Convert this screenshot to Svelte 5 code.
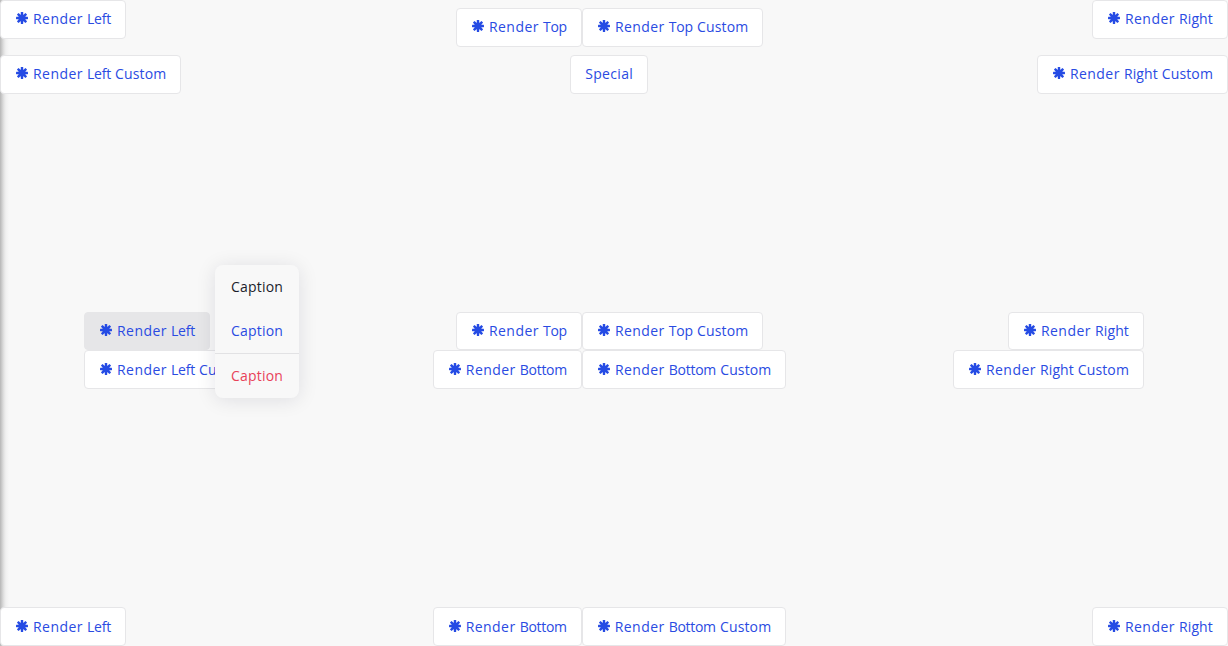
<script>
  const rows = [
    {
      name: 'top',
      left: [['Render Left'], ['Render Left Custom']],
      center: [['Render Top', 'Render Top Custom'], ['Special']],
      right: [['Render Right'], ['Render Right Custom']]
    },
    {
      name: 'middle',
      left: [['Render Left'], ['Render Left Custom']],
      center: [['Render Top', 'Render Top Custom'], ['Render Bottom', 'Render Bottom Custom']],
      right: [['Render Right'], ['Render Right Custom']]
    },
    {
      name: 'bottom',
      left: [['Render Left']],
      center: [['Render Bottom', 'Render Bottom Custom']],
      right: [['Render Right']]
    }
  ];
  const spokes = [0, 45, 90, 135];
  // Splits a label into words, each keeping the space that follows it.
  const words = (label) => label.match(/\S+\s*/g);
</script>

<main>
  {#each rows as row}
    <section class={row.name}>
      {#each ['left', 'center', 'right'] as side}
        <div class="group {side}">
          {#each row[side] as line, i}
            <div class="line">
              {#each line as label}
                <button class:active={row.name === 'middle' && side === 'left' && i === 0}>
                  {#if label !== 'Special'}
                    <svg viewBox="0 0 14 14" aria-hidden="true">
                      {#each spokes as angle}
                        <rect x="5.8" y="1" width="2.4" height="12" rx="0.4" transform="rotate({angle} 7 7)" />
                      {/each}
                      <circle cx="7" cy="7" r="3.6" />
                    </svg>
                  {/if}
                  <span class="label">{#each words(label) as word}<span class="w-{word.trim().toLowerCase()}">{word}</span>{/each}</span>
                </button>
              {/each}
            </div>
          {/each}
        </div>
      {/each}
    </section>
  {/each}
  <div class="menu">
    <div class="item dark">Caption</div>
    <div class="item">Caption</div>
    <div class="item danger">Caption</div>
  </div>
</main>

<style>
  :global(body) {
    background: #f8f8f8;
  }
  main {
    position: relative;
    box-sizing: border-box;
    height: 100vh;
    overflow: hidden;
    display: grid;
    grid-template-rows: 312px 1fr auto;
    font: 14px/20px 'Open Sans', 'Noto Sans', sans-serif;
    color: #2a4be2;
    background: linear-gradient(to right, #b6b6b6 0, #cecece 2px, #e4e4e4 4px, #f1f1f1 6px, #f8f8f8 9px) #f8f8f8;
  }
  section {
    display: flex;
    justify-content: space-between;
    align-items: flex-start;
  }
  .group {
    display: flex;
    flex-direction: column;
    align-items: center;
  }
  .left {
    align-items: flex-start;
  }
  .right {
    align-items: flex-end;
  }
  .top .group {
    gap: 16px;
  }
  .top .center {
    padding-top: 8px;
    gap: 8px;
  }
  .top .center .line:last-child {
    margin-right: 1px;
  }
  .middle {
    padding: 0 84px;
  }
  .center {
    padding-left: 1px;
  }
  .line {
    display: flex;
  }
  button {
    box-sizing: border-box;
    height: 39px;
    display: flex;
    align-items: flex-start;
    padding: 8px 14px 0;
    border: 1px solid #e6e6e8;
    border-radius: 4px;
    background: #fff;
    color: inherit;
    font: inherit;
    white-space: nowrap;
  }
  .middle .line:first-child button {
    height: 38px;
  }
  .middle .line:last-child button,
  .bottom button {
    padding-top: 9px;
  }
  button.active {
    background: #e6e6e8;
  }
  .label {
    white-space: pre;
  }
  .w-render {
    letter-spacing: 0.44px;
  }
  .w-left {
    letter-spacing: -0.22px;
    word-spacing: 0.7px;
  }
  .w-top {
    letter-spacing: -0.24px;
    word-spacing: 0.8px;
  }
  .w-bottom {
    letter-spacing: -0.29px;
    word-spacing: 0.9px;
  }
  .w-right {
    letter-spacing: 0.14px;
  }
  .w-custom {
    letter-spacing: 0.13px;
  }
  .w-special {
    letter-spacing: 0.33px;
  }
  svg {
    width: 14px;
    height: 14px;
    margin: 2px 4px 0 0;
    fill: #254be4;
  }
  .menu {
    position: absolute;
    left: 215px;
    top: 265px;
    width: 84px;
    height: 133px;
    border-radius: 8px;
    background: #f8f8f8;
    box-shadow: 0 2px 20px rgba(20, 20, 50, 0.11);
  }
  .item {
    box-sizing: border-box;
    height: 44px;
    padding: 12px 16px;
    letter-spacing: 0.19px;
  }
  .dark {
    color: #1b1d2b;
  }
  .danger {
    height: 45px;
    border-top: 1px solid #e2e2e4;
    color: #e84258;
  }
</style>
